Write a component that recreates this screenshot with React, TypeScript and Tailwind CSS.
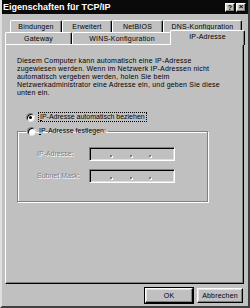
import React from 'react';

const font = { fontFamily: '"Liberation Sans", Arial, sans-serif' };

const raised =
  'border border-t-white border-l-white border-r-black border-b-black shadow-[inset_-1px_-1px_0_#808080,inset_1px_1px_0_#dfdfdf]';

const Tab: React.FC<{ label: string; w: string; active?: boolean }> = ({ label, w, active }) => (
  <div
    className={`${w} ${active ? 'h-[15px] -mx-[2px] -mb-[1px] relative z-10 bg-[#c0c0c0] pb-[3px]' : 'h-[12px]'} flex items-center justify-center whitespace-nowrap rounded-t-[2px] border-t border-l border-r border-t-white border-l-white border-r-black shadow-[inset_-1px_0_0_#808080] text-[7px] tracking-[0.2px] leading-none text-black`}
  >
    {label}
  </div>
);

const Radio: React.FC<{ checked?: boolean }> = ({ checked }) => (
  <span className="w-[9px] h-[9px] rounded-full bg-white border border-t-[#808080] border-l-[#808080] border-r-[#dfdfdf] border-b-[#dfdfdf] shadow-[inset_1px_1px_0_#000] flex items-center justify-center shrink-0">
    {checked && <span className="w-[3px] h-[3px] rounded-full bg-black" />}
  </span>
);

const IpField: React.FC<{ label: string }> = ({ label }) => (
  <div className="flex items-center">
    <span className="w-[52px] whitespace-nowrap text-[7px] text-[#808080] [text-shadow:1px_1px_0_#fff]">{label}</span>
    <div className="w-[86px] h-[14px] border border-t-[#808080] border-l-[#808080] border-r-white border-b-white shadow-[inset_1px_1px_0_#000,inset_-1px_-1px_0_#dfdfdf] flex items-end justify-between pl-[20px] pr-[23px] pb-[3px]">
      <span className="w-[2px] h-[2px] bg-[#808080] shadow-[1px_1px_0_#fff]" />
      <span className="w-[2px] h-[2px] bg-[#808080] shadow-[1px_1px_0_#fff]" />
      <span className="w-[2px] h-[2px] bg-[#808080] shadow-[1px_1px_0_#fff]" />
    </div>
  </div>
);

export default function App() {
  return (
    <div style={font} className="w-[250px] h-[308px] bg-[#c0c0c0] flex flex-col border-l-2 border-l-[#dfdfdf] border-r-2 border-r-[#404040] border-b-2 border-b-[#404040] overflow-hidden">
      {/* Title bar */}
      <div className="h-[14px] -ml-[2px] -mr-[2px] bg-[#0a0a0a] flex items-center justify-between pl-[3px] pr-[4px] shrink-0">
        <span className="text-white font-bold text-[9px] leading-none">Eigenschaften für TCP/IP</span>
        <div className="flex gap-[1px]">
          <span className={`w-[10px] h-[9px] bg-[#c0c0c0] ${raised} flex items-center justify-center text-[7px] font-bold leading-none text-black`}>?</span>
          <span className={`w-[10px] h-[9px] bg-[#c0c0c0] ${raised} flex items-center justify-center text-[8px] font-bold leading-none text-black`}>×</span>
        </div>
      </div>

      <div className="flex-1 flex flex-col pl-[3px] pr-[3px] pt-[6px]">
        {/* Tabs */}
        <div className="flex pl-[5px]">
          <Tab label="Bindungen" w="w-[52px]" />
          <Tab label="Erweitert" w="w-[50px]" />
          <Tab label="NetBIOS" w="w-[51px]" />
          <Tab label="DNS-Konfiguration" w="w-[79px]" />
        </div>
        <div className="flex items-end h-[12px]">
          <Tab label="Gateway" w="w-[67px]" />
          <Tab label="WINS-Konfiguration" w="w-[100px]" />
          <Tab label="IP-Adresse" w="w-[75px]" active />
        </div>

        {/* Panel */}
        <div className="h-[240px] w-[239px] border border-t-white border-l-white border-r-black border-b-black shadow-[inset_-1px_-1px_0_#808080] pl-[11px] pt-[12px] text-black">
          <p className="text-[7px] tracking-[0.2px] leading-[8px] whitespace-nowrap">
            Diesem Computer kann automatisch eine IP-Adresse
            <br />
            zugewiesen werden. Wenn im Netzwerk IP-Adressen nicht
            <br />
            automatisch vergeben werden, holen Sie beim
            <br />
            Netzwerkadministrator eine Adresse ein, und geben Sie diese
            <br />
            unten ein.
          </p>

          <div className="flex items-center h-[10px] mt-[15px] pl-[9px] gap-[3px]">
            <Radio checked />
            <span className="text-[7px] leading-[8px] whitespace-nowrap border border-dotted border-black px-[1px]">
              <span className="underline">I</span>P-Adresse automatisch beziehen
            </span>
          </div>

          <fieldset className="mt-[4px] w-[191px] h-[76px] border border-[#808080] shadow-[1px_1px_0_#fff,inset_1px_1px_0_#fff] p-0">
            <legend className="ml-[8px] px-[1px] flex items-center gap-[3px] h-[10px]">
              <Radio />
              <span className="text-[7px] leading-[8px] whitespace-nowrap pr-[1px]">
                <span className="underline">I</span>P-Adresse festlegen:
              </span>
            </legend>
            <div className="flex flex-col gap-[8px] pt-[11px] pl-[19px]">
              <IpField label="IP-Adresse:" />
              <IpField label="Subnet Mask:" />
            </div>
          </fieldset>
        </div>

        {/* Buttons */}
        <div className="flex justify-end gap-[4px] mt-[4px] pr-[2px]">
          <button className={`w-[48px] h-[15px] bg-[#c0c0c0] ${raised} outline outline-1 outline-black text-[7px] tracking-[0.2px] leading-none text-black`}>OK</button>
          <button className={`w-[46px] h-[15px] bg-[#c0c0c0] ${raised} text-[7px] tracking-[0.2px] leading-none text-black`}>Abbrechen</button>
        </div>
      </div>
    </div>
  );
}
